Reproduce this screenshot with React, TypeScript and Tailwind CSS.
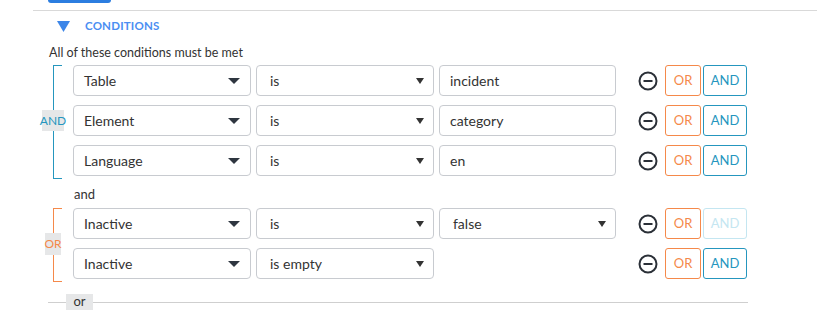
import React from 'react';

const TEAL = '#2596be';
const ORANGE = '#f5894a';

type Row = {
  field: string;
  op: string;
  value?: string;
  valueSelect?: boolean;
  andDisabled?: boolean;
};

function Caret() {
  return (
    <svg width="12" height="6" viewBox="0 0 12 6" className="shrink-0">
      <path d="M0 0h12L6 6z" fill="#2e3640" />
    </svg>
  );
}

function SmallCaret() {
  return (
    <svg width="8" height="6" viewBox="0 0 8 6" className="shrink-0">
      <path d="M0 0h8L4 6z" fill="#333" />
    </svg>
  );
}

function MinusCircle() {
  return (
    <svg width="20" height="20" viewBox="0 0 20 20">
      <circle cx="10" cy="10" r="8.5" fill="none" stroke="#2b3038" strokeWidth="2" />
      <path d="M5.5 10h9" stroke="#2b3038" strokeWidth="2" />
    </svg>
  );
}

function ConditionRow({ row }: { row: Row }) {
  return (
    <div className="flex items-center h-[31px]">
      {/* field */}
      <div className="w-[178px] h-full flex items-center justify-between pl-[10px] pr-[10px] border border-[#c8cbd0] rounded-[4px] text-[14px] text-[#333]">
        <span>{row.field}</span>
        <Caret />
      </div>
      {/* operator */}
      <div className="ml-[5px] w-[178px] h-full flex items-center justify-between pl-[13px] pr-[9px] border border-[#c8cbd0] rounded-[4px] text-[14px] text-[#333]">
        <span>{row.op}</span>
        <SmallCaret />
      </div>
      {/* value */}
      {row.value !== undefined ? (
        <div className="ml-[5px] w-[177px] h-full flex items-center justify-between pl-[10px] pr-[9px] border border-[#c8cbd0] rounded-[4px] text-[14px] text-[#333]">
          <span className={row.valueSelect ? 'pl-[3px]' : ''}>{row.value}</span>
          {row.valueSelect && <SmallCaret />}
        </div>
      ) : (
        <div className="ml-[5px] w-[177px]" />
      )}
      <div className="ml-[22px] flex items-center">
        <MinusCircle />
      </div>
      <div className="ml-[7px] w-[36px] h-full flex items-center justify-center border border-[#f5894a] rounded-[3px] text-[13px] text-[#f5894a]">
        OR
      </div>
      <div
        className={`ml-[2px] w-[44px] h-full flex items-center justify-center border rounded-[3px] text-[13px] ${
          row.andDisabled ? 'border-[#c4e6f1] text-[#c4e6f1]' : 'border-[#2596be] text-[#2596be]'
        }`}
      >
        AND
      </div>
    </div>
  );
}

function Group({ label, color, rows, labelBox }: { label: string; color: string; rows: Row[]; labelBox: string }) {
  return (
    <div className="flex">
      {/* bracket column */}
      <div className="relative w-[31px] shrink-0">
        <div
          className="absolute left-[11px] top-0 bottom-[-3px] w-[9px] border-l border-y"
          style={{ borderColor: color }}
        />
        <div className="absolute inset-y-0 left-0 flex items-center">
          <div className={`${labelBox} bg-[#e6e7e8] flex items-center justify-center text-[12px] leading-none`} style={{ color }}>
            {label}
          </div>
        </div>
      </div>
      <div className="flex flex-col gap-[9px]">
        {rows.map((r, i) => (
          <ConditionRow key={i} row={r} />
        ))}
      </div>
    </div>
  );
}

export default function App() {
  return (
    <div
      className="w-[817px] h-[315px] bg-white overflow-hidden text-[#333]"
      style={{ fontFamily: 'Lato, "Open Sans", sans-serif' }}
    >
      <div className="ml-[48px] w-[63px] h-[3px] bg-[#2b7de0] rounded-b-[3px]" />
      <div className="mt-[7px] ml-[33px] h-px bg-[#d9d9d9]" />

      {/* header */}
      <div className="flex items-center h-[28px] mt-[1px] ml-[57px]">
        <svg width="13" height="11" viewBox="0 0 13 11">
          <path d="M0 0h13L6.5 11z" fill="#3d86e8" />
        </svg>
        <span className="ml-[15px] text-[11.5px] font-bold tracking-[0.2px] text-[#4a8ef2]">CONDITIONS</span>
      </div>

      <div className="ml-[49px] mt-[5px] text-[12.5px] leading-[16px]">All of these conditions must be met</div>

      <div className="ml-[42px] mt-[4px]">
        <Group
          label="AND"
          color={TEAL}
          labelBox="w-[22px] h-[21px]"
          rows={[
            { field: 'Table', op: 'is', value: 'incident' },
            { field: 'Element', op: 'is', value: 'category' },
            { field: 'Language', op: 'is', value: 'en' },
          ]}
        />
      </div>

      <div className="ml-[74px] mt-[9px] h-[18px] text-[13px] leading-[18px]">and</div>

      <div className="ml-[42px] mt-[5px]">
        <Group
          label="OR"
          color={ORANGE}
          labelBox="ml-[3px] w-[16px] h-[22px]"
          rows={[
            { field: 'Inactive', op: 'is', value: 'false', valueSelect: true, andDisabled: true },
            { field: 'Inactive', op: 'is empty' },
          ]}
        />
      </div>

      {/* or separator */}
      <div className="ml-[48px] mt-[15px] w-[700px] flex items-center">
        <div className="w-[18px] h-px bg-[#cfcfcf]" />
        <div className="w-[27px] h-[16px] bg-[#e6e7e8] flex items-center justify-center text-[13px]">or</div>
        <div className="flex-1 h-px bg-[#cfcfcf]" />
      </div>
    </div>
  );
}
